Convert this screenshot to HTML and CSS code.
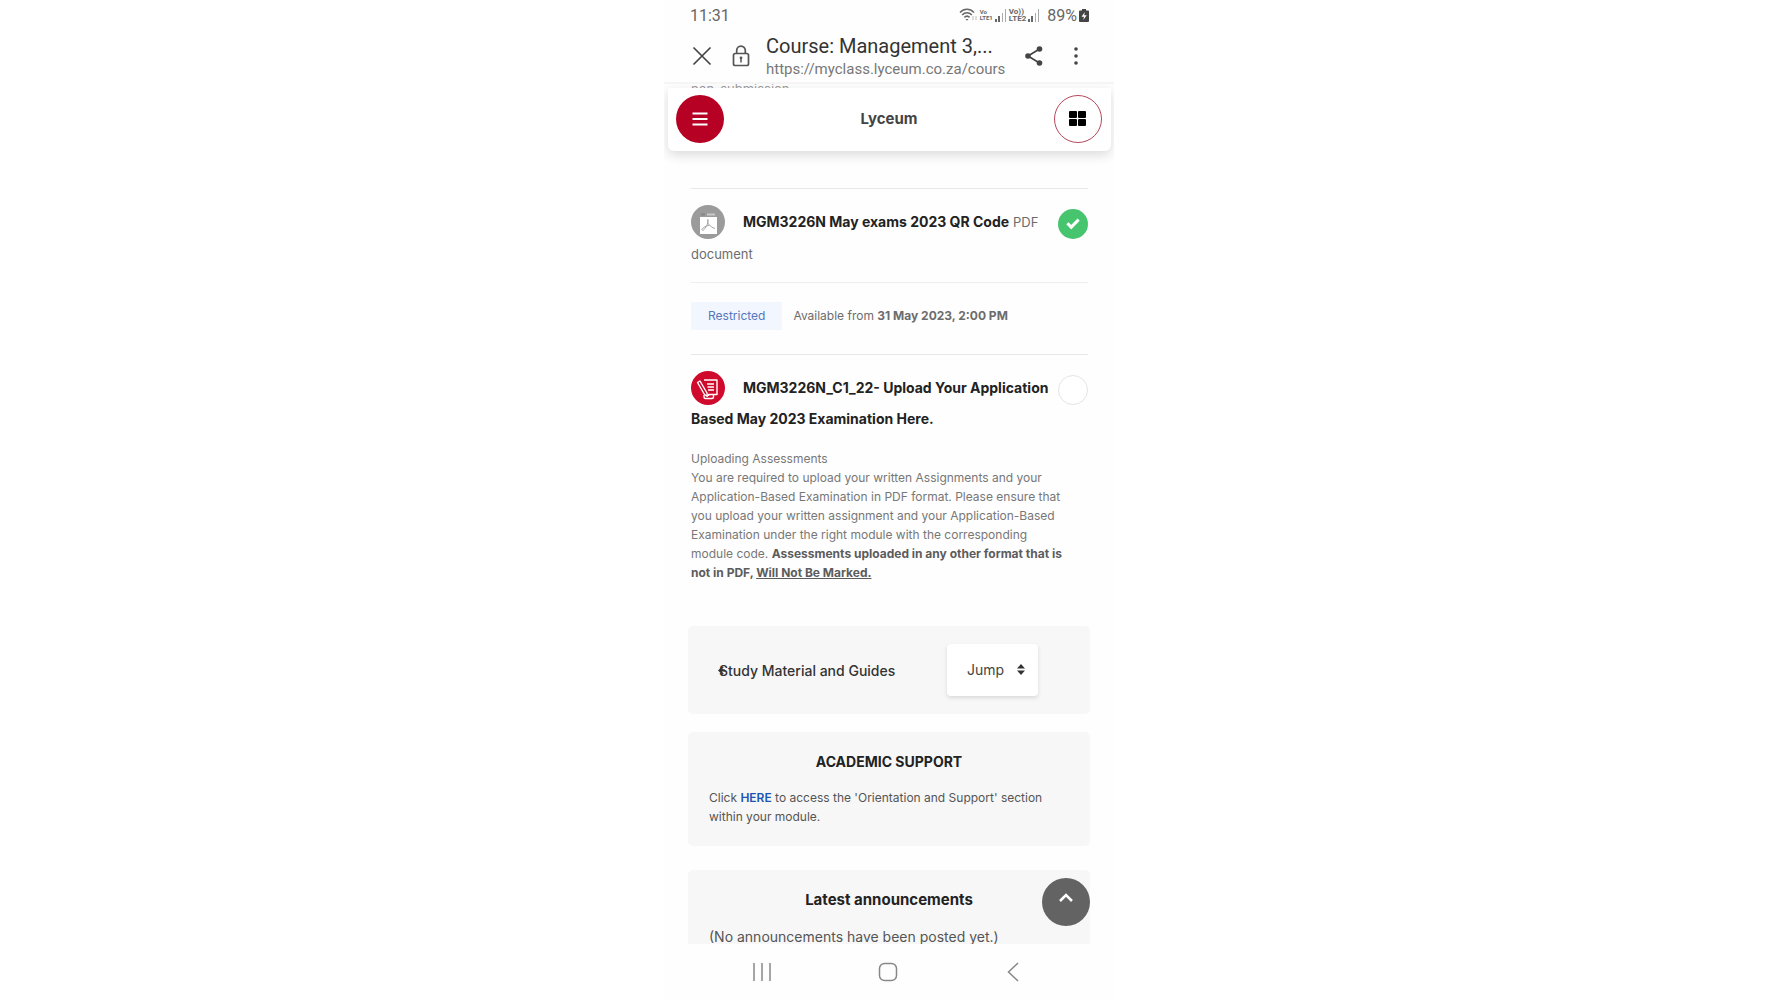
FILE: index.html
```html
<!DOCTYPE html>
<html lang="en">
<head>
  <meta charset="UTF-8" />
  <meta name="viewport" content="width=device-width, initial-scale=1.0"/>
  <title>Course: Management 3</title>
  <link rel="stylesheet" href="styles.css">
</head>
<body>
  <div class="phone">
    <div class="status-bar">
      <span>11:31</span>
      <div class="status-icons">
        <svg width="19" height="14" viewBox="0 0 19 14" fill="none" stroke="#666" stroke-width="1.5">
          <path d="M1 4.5C5 .2 11 .2 15 4.5M3.2 7C6 4 10 4 12.8 7M5.4 9.4C7 7.8 9 7.8 10.6 9.4"/>
          <path d="M6.5 11h3L8 12.8z" fill="#666" stroke="none"/>
          <path d="M14 8v4M17 8v4" stroke="#bbb" stroke-width="1"/>
        </svg>
        <span class="lte">Vo<br>LTE1</span>
        <svg width="12" height="13" viewBox="0 0 12 13"><path d="M0 10h2v3H0zM3 7h2v6H3z" fill="#666"/><path d="M7 4h1v9H7zM10 0h1v13h-1z" fill="#aaa"/></svg>
        <span class="lte lte-big">Vo))<br>LTE2</span>
        <svg width="12" height="13" viewBox="0 0 12 13"><path d="M0 10h2v3H0zM3 7h2v6H3z" fill="#666"/><path d="M7 4h1v9H7zM10 0h1v13h-1z" fill="#aaa"/></svg>
        <span class="battery-text">89%</span>
        <svg width="10" height="13" viewBox="0 0 10 13"><path d="M3 0h4v1.5h2Q10 1.500 10 2.500V12q0 1-1 1H1q-1 0-1-1V2.500q0-1 1-1h2z" fill="#444"/><path d="M5.800 3L2.500 7.800H5L4.300 11 7.700 6.300H5.200z" fill="#fff"/></svg>
      </div>
    </div>

    <div class="browser-bar">
      <button class="icon-btn" aria-label="Close">
        <svg width="20" height="20" viewBox="0 0 20 20" fill="none" stroke="#444" stroke-width="1.700"><path d="M1.500 1.500l17 17M18.500 1.500l-17 17"/></svg>
      </button>
      <button class="icon-btn lock" aria-label="Site information">
        <svg width="18" height="22" viewBox="0 0 18 22" fill="none" stroke="#555" stroke-width="1.700"><rect x="1.500" y="8.500" width="15" height="12" rx="1.800"/><path d="M4.700 8.500V5.500a4.300 4.300 0 0 1 8.600 0v3"/><path d="M9 13v4.500" stroke-width="1.500"/><circle cx="9" cy="12.800" r="1.400" fill="#555" stroke="none"/></svg>
      </button>
      <div class="page-info">
        <div class="page-title">Course: Management 3,...</div>
        <div class="page-url">https://myclass.lyceum.co.za/cours</div>
      </div>
      <button class="icon-btn share" aria-label="Share">
        <svg width="18" height="20" viewBox="0 0 18 20"><path d="M14.500 3L3 10l11.500 7" fill="none" stroke="#444" stroke-width="1.700"/><g fill="#444"><circle cx="14.500" cy="3" r="2.800"/><circle cx="3" cy="10" r="2.800"/><circle cx="14.500" cy="17" r="2.800"/></g></svg>
      </button>
      <button class="icon-btn" aria-label="More options">
        <svg width="6" height="20" viewBox="0 0 6 20" fill="#444"><circle cx="3" cy="3" r="1.800"/><circle cx="3" cy="10" r="1.800"/><circle cx="3" cy="17" r="1.800"/></svg>
      </button>
    </div>

    <div class="webview">
      <div class="cut-line">non-submission</div>
      <header>
        <button class="menu-btn" aria-label="Menu">
          <svg width="16" height="14" viewBox="0 0 16 14" stroke="#fff" stroke-width="2"><path d="M.5 1.500h15M.5 7h15M.5 12.500h15"/></svg>
        </button>
        <a href="#" class="brand">Lyceum</a>
        <button class="grid-btn" aria-label="Dashboard">
          <svg width="17" height="15" viewBox="0 0 17 15"><rect width="8" height="7" rx="1"/><rect x="9" width="8" height="7" rx="1"/><rect y="8" width="8" height="7" rx="1"/><rect x="9" y="8" width="8" height="7" rx="1"/></svg>
        </button>
      </header>

      <main>
        <section class="activity">
          <svg class="activity-icon" width="34" height="34" viewBox="0 0 34 34"><circle cx="17" cy="17" r="17" fill="#9b9b9b"/><path d="M9 12h17v17H9z" fill="#fff"/><path d="M10 9.500h4" stroke="#858585" stroke-width="2"/><path d="M16 9.500h8" stroke="#c9c9c9" stroke-width="2"/><path d="M17 14.500c-.8 2 0 4 1.300 5.500 1.200 1.500 3 2.500 5.700 3.500M18 20.500c-3 .4-5.500 1.300-7.500 4.500M16.800 14.500c.6 4-1.500 8-5.300 11.500" fill="none" stroke="#a5a5a5" stroke-width="1"/></svg>
          <a href="#" class="activity-name">MGM3226N May exams 2023 QR Code</a>
          <span class="activity-type">PDF<br>document</span>
          <input type="checkbox" class="completion" aria-label="MGM3226N May exams 2023 QR Code done" checked>
        </section>

        <section class="restriction">
          <span class="badge">Restricted</span>
          <span>Available from <b>31 May 2023, 2:00 PM</b></span>
        </section>

        <section class="activity">
          <svg class="activity-icon" width="34" height="34" viewBox="0 0 34 34"><circle cx="17" cy="17" r="17" fill="#d00a2c"/><g fill="none" stroke="#fff" stroke-width="1.400" stroke-linejoin="round"><path d="M13 9h13v14.500h-3.500M13 24v2q0 1.500 1.500 1.500h6.500q1.500 0 1.500-1.500v-2.500h-5V25"/><path d="M16 13h7M16.500 16h6.500M17 19h6"/><path d="M6.500 11.500L9 10l7 12 .3 3.300-2.800-1.800z"/></g></svg>
          <a href="#" class="activity-name">MGM3226N_C1_22- Upload Your Application<br>Based May 2023 Examination Here.</a>
          <input type="checkbox" class="completion" aria-label="Examination upload done">
        </section>

        <div class="description">
          Uploading Assessments<br>
          You are required to upload your written Assignments and your<br>
          Application-Based Examination in PDF format. Please ensure that<br>
          you upload your written assignment and your Application-Based<br>
          Examination under the right module with the corresponding<br>
          module code. <b>Assessments uploaded in any other format that is<br>
          not in PDF, <u>Will Not Be Marked.</u></b>
        </div>

        <div class="card jump-card">
          <a href="#" class="prev-link">
            <svg class="prev-arrow" width="7" height="9" viewBox="0 0 7 9" fill="none" stroke="#333" stroke-width="1.800"><path d="M5 .8L1.300 4.500 5 8.200M1.500 4.500H7"/></svg>
            Study Material and Guides
          </a>
          <div class="jump">
            <select aria-label="Jump to section">
              <option>Jump</option>
            </select>
            <svg class="jump-arrows" width="8" height="11" viewBox="0 0 8 11" fill="#333"><path d="M4 0l4 4.500H0zM4 11l4-4.500H0z"/></svg>
          </div>
        </div>

        <div class="card">
          <h2>ACADEMIC SUPPORT</h2>
          <p>Click <a href="#">HERE</a> to access the 'Orientation and Support' section<br>within your module.</p>
        </div>

        <div class="card announcements">
          <h2>Latest announcements</h2>
          <p>(No announcements have been posted yet.)</p>
        </div>
      </main>

      <button class="top-btn" aria-label="Back to top">
        <svg width="14" height="9" viewBox="0 0 14 9" fill="none" stroke="#fff" stroke-width="2.500"><path d="M1 8l6-6 6 6"/></svg>
      </button>
    </div>

    <nav class="nav-bar">
      <button class="icon-btn" aria-label="Recent apps">
        <svg width="20" height="20" viewBox="0 0 20 20" stroke="#888" stroke-width="1.500"><path d="M2 1v18M10 1v18M18 1v18"/></svg>
      </button>
      <button class="icon-btn" aria-label="Home">
        <svg width="20" height="20" viewBox="0 0 20 20" fill="none" stroke="#888" stroke-width="1.500"><rect x="1.500" y="1.500" width="17" height="17" rx="5"/></svg>
      </button>
      <button class="icon-btn" aria-label="Back">
        <svg width="20" height="20" viewBox="0 0 20 20" fill="none" stroke="#888" stroke-width="1.500"><path d="M15 1L5.500 10l9.500 9"/></svg>
      </button>
    </nav>
  </div>
</body>
</html>
```
FILE: styles.css
```css
* {
  margin: 0;
  padding: 0;
  box-sizing: border-box;
}

body {
  background: #fff;
  font-family: Inter, sans-serif;
  font-size: 12px;
  color: #6c6c6c;
}

a {
  text-decoration: none;
  color: inherit;
}

button {
  border: none;
  background: none;
  cursor: pointer;
}

svg {
  display: block;
}

.phone {
  width: 100%;
  max-width: 450px;
  height: 100vh;
  margin: 0 auto;
  display: flex;
  flex-direction: column;
  background: #fefefe;
}

/* phone status bar */
.status-bar {
  display: flex;
  justify-content: space-between;
  align-items: center;
  height: 30px;
  padding: 0 25px 0 26px;
  font-family: Roboto, sans-serif;
  font-size: 16px;
  color: #666;
}

.status-icons {
  display: flex;
  align-items: center;
  gap: 2px;
}

.lte {
  font-size: 6px;
  line-height: 6px;
  font-weight: bold;
}

.lte-big {
  font-size: 8px;
  line-height: 7px;
}

.battery-text {
  margin-left: 5px;
}

/* browser bar */
.browser-bar {
  display: flex;
  align-items: center;
  height: 54px;
  padding: 0 35px 0 28px;
  border-bottom: 2px solid #f5f5f5;
  font-family: Roboto, sans-serif;
}

.lock {
  margin: 0 16px 0 20px;
}

.page-info {
  flex: 1;
  min-width: 0;
  white-space: nowrap;
}

.page-title {
  font-size: 20px;
  line-height: 26px;
  color: #333;
}

.page-url {
  font-size: 15px;
  line-height: 21px;
  color: #777;
  overflow: hidden;
}

.share {
  margin: 0 30px 0 20px;
}

/* course page */
.webview {
  flex: 1;
  min-height: 0;
  overflow: hidden;
  position: relative;
}

.cut-line {
  height: 4px;
  overflow: hidden;
  padding-left: 27px;
  font-size: 13px;
  line-height: 10px;
  color: #999;
}

header {
  display: flex;
  justify-content: space-between;
  align-items: center;
  height: 63px;
  margin: 0 3px 0 4px;
  padding: 0 9px 2px 8px;
  background: #fff;
  border-radius: 0 0 6px 6px;
  box-shadow: 0 4px 12px rgba(0, 0, 0, 0.14);
}

.menu-btn,
.grid-btn,
.top-btn {
  display: flex;
  justify-content: center;
  align-items: center;
  width: 48px;
  height: 48px;
  border-radius: 50%;
}

.menu-btn {
  background: #b60024;
}

.grid-btn {
  border: 1px solid #b5475c;
}

.brand {
  font-size: 15px;
  font-weight: 700;
  color: #444;
}

main {
  padding: 37px 24px 0;
}

.activity {
  position: relative;
  margin: 0 2px 0 3px;
  padding: 17px 0 12px;
  border-top: 1px solid #e8e8e8;
  font-size: 14px;
  line-height: 31px;
  white-space: nowrap;
}

.activity-icon {
  display: inline-block;
  margin: -5px 14px -3px 0;
  vertical-align: middle;
}

.activity-name {
  font-weight: 700;
  color: #222;
}

.activity-type {
  font-size: 13px;
}

.completion {
  appearance: none;
  position: absolute;
  top: 20px;
  right: 0;
  display: flex;
  justify-content: center;
  align-items: center;
  width: 30px;
  height: 30px;
  border: 1px solid #e4e4e4;
  border-radius: 50%;
  background: #fff;
}

.completion:checked {
  border: none;
  background: #46c46e;
}

.completion:checked::after {
  content: "";
  width: 9px;
  height: 4px;
  margin-bottom: 3px;
  border-left: 3px solid #fff;
  border-bottom: 3px solid #fff;
  transform: rotate(-45deg);
}

.restriction {
  display: flex;
  align-items: center;
  gap: 11px;
  height: 72px;
  margin: 0 2px 0 3px;
  padding-bottom: 6px;
  border-top: 1px solid #eee;
}

.badge {
  padding: 4px 17px;
  line-height: 20px;
  background: #f2f6fe;
  color: #5577bd;
}

.description {
  margin: 3px 2px 44px 3px;
  line-height: 19px;
  color: #777;
  white-space: nowrap;
}

.description b {
  color: #5c5c5c;
}

.card {
  margin-bottom: 24px;
  padding: 19px 21px 20px;
  background: #f7f7f7;
  border-radius: 5px;
  color: #555;
}

.card h2 {
  margin-bottom: 15px;
  font-size: 14px;
  line-height: 22px;
  text-align: center;
  color: #222;
}

.card p {
  line-height: 19px;
}

.card p a {
  font-weight: 600;
  color: #1d54b3;
}

.jump-card {
  display: flex;
  justify-content: space-between;
  align-items: center;
  height: 88px;
  margin-bottom: 18px;
  padding: 0 52px 0 31px;
}

.prev-link {
  position: relative;
  font-size: 14px;
  font-weight: 500;
  color: #333;
}

.prev-arrow {
  position: absolute;
  left: -1px;
  top: 4px;
}

.jump {
  position: relative;
}

.jump select {
  appearance: none;
  width: 91px;
  height: 52px;
  padding: 0 20px 2px;
  border: none;
  border-radius: 4px;
  background: #fff;
  box-shadow: 0 2px 4px rgba(0, 0, 0, 0.12);
  font-family: inherit;
  font-size: 14px;
  color: #444;
}

.jump-arrows {
  position: absolute;
  right: 13px;
  top: 20px;
  pointer-events: none;
}

.card.announcements h2 {
  font-size: 15px;
}

.card.announcements p {
  font-size: 14px;
  line-height: 22px;
}

.top-btn {
  position: absolute;
  right: 24px;
  bottom: 18px;
  background: #636363;
  padding-bottom: 10px;
}

/* android buttons */
.nav-bar {
  display: flex;
  justify-content: space-between;
  align-items: center;
  height: 56px;
  padding: 0 91px 0 88px;
}
```
